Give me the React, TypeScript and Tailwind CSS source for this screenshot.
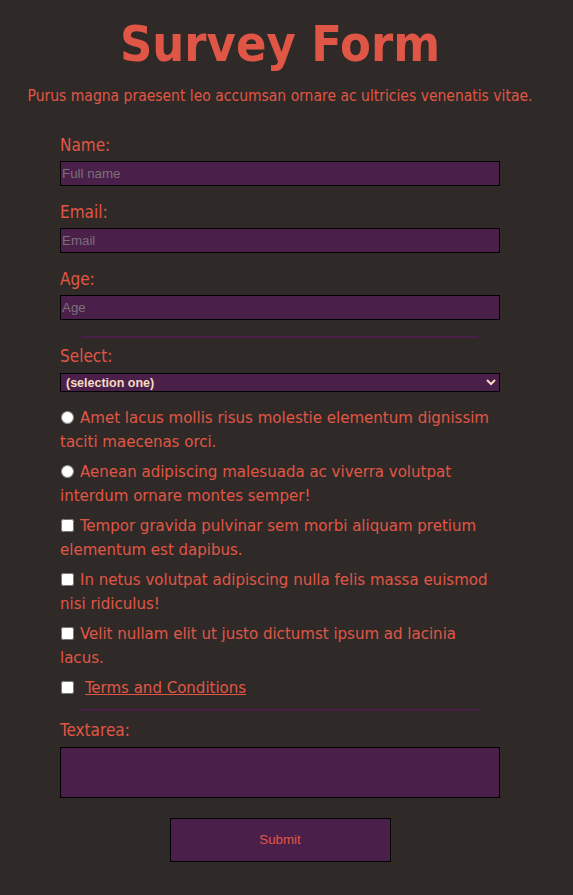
export default function App() {
  const font = "font-['DejaVu_Sans_Condensed','Liberation_Sans',sans-serif]";
  const items = [
    { type: "radio", text: "Amet lacus mollis risus molestie elementum dignissim taciti maecenas orci." },
    { type: "radio", text: "Aenean adipiscing malesuada ac viverra volutpat interdum ornare montes semper!" },
    { type: "checkbox", text: "Tempor gravida pulvinar sem morbi aliquam pretium elementum est dapibus." },
    { type: "checkbox", text: "In netus volutpat adipiscing nulla felis massa euismod nisi ridiculus!" },
    { type: "checkbox", text: "Velit nullam elit ut justo dictumst ipsum ad lacinia lacus." },
  ];
  const input =
    "block w-full h-[25px] bg-[#4a1f4a] border border-black px-[1px] text-[13.33px] font-['Liberation_Sans',sans-serif] text-[#e0e0e0] placeholder:text-[#7a7079] outline-none";
  const label = "block text-[17px] leading-[24px]";

  return (
    <div className={`min-h-screen bg-[#2f2a27] text-[#e05646] ${font} pb-[34px]`}>
      <div className="w-[560px]">
        <h1 className="pt-[14px] text-center text-[50px] leading-[60px] font-bold">Survey Form</h1>
        <p className="mt-[10px] text-center text-[15.5px] leading-[24px]">
          Purus magna praesent leo accumsan ornare ac ultricies venenatis vitae.
        </p>

        <form className="w-[440px] mx-auto mt-[25px]" onSubmit={(e) => e.preventDefault()}>
          <label className={`${label} mb-[4px]`}>Name:</label>
          <input className={input} placeholder="Full name" />

          <label className={`${label} mt-[14px] mb-[4px]`}>Email:</label>
          <input className={input} placeholder="Email" />

          <label className={`${label} mt-[14px] mb-[4px]`}>Age:</label>
          <input className={input} placeholder="Age" />

          <hr className="w-[90%] mx-auto mt-[16px] border-0 h-[2px] bg-[#4a1f4a]" />

          <label className={`${label} mt-[6px] mb-[5px]`}>Select:</label>
          <select className="block w-full h-[19px] bg-[#4a1f4a] border border-black text-[12.5px] font-bold font-['Liberation_Sans',sans-serif] text-[#f3dcc0] px-[1px]">
            <option>(selection one)</option>
          </select>

          <div className="mt-[13px] flex flex-col gap-[6px]">
            {items.map((it, i) => (
              <label key={i} className="block text-[16.7px] leading-[24px]">
                <input
                  type={it.type}
                  name={it.type === "radio" ? "choice" : undefined}
                  className="w-[13px] h-[13px] mr-[6px] ml-[1px] align-[-1px]"
                />
                {it.text}
              </label>
            ))}
            <label className="block text-[16.7px] leading-[24px]">
              <input type="checkbox" className="w-[13px] h-[13px] mr-[11px] ml-[1px] align-[-1px]" />
              <a href="#" className="underline">Terms and Conditions</a>
            </label>
          </div>

          <hr className="w-[90%] mx-auto mt-[10px] border-0 h-[2px] bg-[#4a1f4a]" />

          <label className={`${label} mt-[7px] mb-[5px]`}>Textarea:</label>
          <textarea className="block w-full h-[51px] bg-[#4a1f4a] border border-black resize-none outline-none" />

          <button
            type="submit"
            className="block mx-auto mt-[20px] w-[221px] h-[44px] bg-[#4a1f4a] border border-black text-[13.33px] font-['Liberation_Sans',sans-serif] text-[#e05646]"
          >
            Submit
          </button>
        </form>
      </div>
    </div>
  );
}
